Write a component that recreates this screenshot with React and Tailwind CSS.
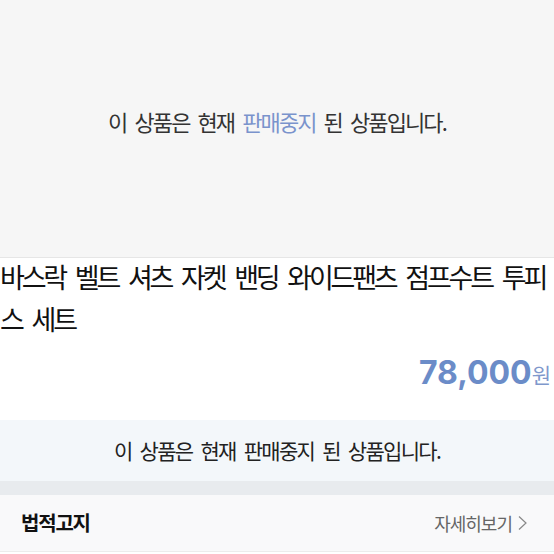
import { useState } from 'react';

const kr = '"Noto Sans CJK KR", "Noto Sans", sans-serif';

export default function App() {
  const [title] = useState('바스락 벨트 셔츠 자켓 밴딩 와이드팬츠 점프수트 투피스 세트');

  return (
    <div className="w-[554px] h-[554px] overflow-hidden bg-white" style={{ fontFamily: kr }}>
      {/* 판매중지 안내 */}
      <div className="h-[258px] bg-[#f6f6f6] border-b border-[#e6e6e6] flex items-center justify-center">
        <p className="text-[22px] tracking-[-1.9px] [word-spacing:5px] text-[#333] -mt-[14px]">
          이 상품은 현재 <span className="text-[#7a93cc]">판매중지</span> 된 상품입니다.
        </p>
      </div>

      {/* 상품명 */}
      <h1 className="text-[27px] leading-[42px] tracking-[-3.2px] [word-spacing:7px] text-[#111] font-normal -mt-[2px]">
        {title}
      </h1>

      {/* 가격 */}
      <div className="h-[80px] flex justify-end items-start pt-[15px] pr-[3px]">
        <span className="text-[32px] leading-[36px] font-bold text-[#6b8cc8]" style={{ fontFamily: 'Inter, sans-serif' }}>
          78,000
        </span>
        <span className="text-[21px] leading-[36px] text-[#7f98cc] mt-[1px]">원</span>
      </div>

      {/* 하단 안내 */}
      <div className="h-[61px] bg-[#f3f7fa] flex items-center justify-center">
        <p className="text-[21px] tracking-[-1.7px] [word-spacing:5px] text-[#222]">
          이 상품은 현재 판매중지 된 상품입니다.
        </p>
      </div>
      <div className="h-[14px] bg-[#e8ebee]" />

      {/* 법적고지 */}
      <div className="h-[57px] bg-[#f9f9fa] border-b border-[#ececec] flex items-center justify-between pl-[21px] pr-[26px]">
        <span className="text-[20px] font-bold tracking-[-1.2px] text-[#111]">법적고지</span>
        <span className="flex items-center text-[18px] tracking-[-1px] text-[#666]">
          자세히보기
          <svg className="ml-[5px]" width="11" height="16" viewBox="0 0 11 16" fill="none">
            <polyline points="2,1.5 9,8 2,14.5" stroke="#888" strokeWidth="1.2" />
          </svg>
        </span>
      </div>
    </div>
  );
}
